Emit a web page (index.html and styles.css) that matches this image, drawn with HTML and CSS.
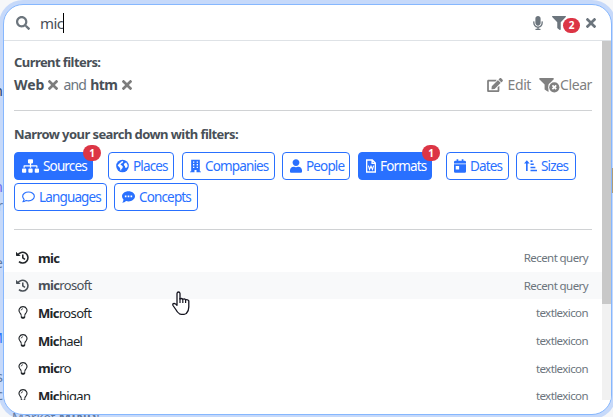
FILE: index.html
```
<!DOCTYPE html>
<html lang="en">
<head>
<meta charset="utf-8">
<title>Search</title>
<link rel="stylesheet" href="styles.css">
</head>
<body>
<svg class="defs" aria-hidden="true">
  <symbol id="search" viewBox="0 0 512 512"><path d="M505 442.700L405.300 343c-4.500-4.500-10.600-7-17-7H372c27.600-35.300 44-79.700 44-128C416 93.100 322.900 0 208 0S0 93.100 0 208s93.100 208 208 208c48.300 0 92.700-16.400 128-44v16.300c0 6.400 2.500 12.500 7 17l99.700 99.700c9.400 9.400 24.600 9.400 33.900 0l28.300-28.300c9.400-9.400 9.400-24.600.1-34zM208 336c-70.700 0-128-57.200-128-128 0-70.700 57.200-128 128-128 70.700 0 128 57.200 128 128 0 70.700-57.200 128-128 128z"/></symbol>
  <symbol id="mic" viewBox="0 0 352 512"><path d="M176 352c53 0 96-43 96-96V96c0-53-43-96-96-96S80 43 80 96v160c0 53 43 96 96 96zm160-160h-16c-8.800 0-16 7.200-16 16v48c0 74.800-64.500 134.800-140.800 127.400C96.700 376.900 48 317.100 48 250.300V208c0-8.800-7.200-16-16-16H16c-8.800 0-16 7.200-16 16v40.200c0 89.600 64 169.500 152 181.700V464H96c-8.800 0-16 7.200-16 16v16c0 8.800 7.200 16 16 16h160c8.800 0 16-7.200 16-16v-16c0-8.800-7.200-16-16-16h-56v-33.800C285.700 418.500 352 344.900 352 256v-48c0-8.800-7.200-16-16-16z"/></symbol>
  <symbol id="funnel" viewBox="0 0 512 512"><path d="M488 0H24C2.700 0-8 25.900 7.100 41L192 225.900V432c0 7.800 3.800 15.200 10.200 19.700l80 56C298 518.700 320 507.500 320 488V225.900L505 41C520 25.900 509.300 0 488 0z"/></symbol>
  <symbol id="x" viewBox="0 0 352 352"><path d="M242.700 176l100.100-100.100c12.300-12.300 12.300-32.200 0-44.500l-22.200-22.200c-12.300-12.300-32.200-12.300-44.500 0L176 109.300 75.900 9.200c-12.300-12.300-32.200-12.300-44.500 0L9.200 31.500c-12.300 12.300-12.300 32.200 0 44.500L109.300 176 9.200 276.100c-12.300 12.300-12.300 32.200 0 44.500l22.200 22.200c12.300 12.300 32.200 12.300 44.500 0L176 242.700l100.100 100.100c12.300 12.300 32.200 12.300 44.500 0l22.200-22.200c12.300-12.300 12.300-32.200 0-44.500z"/></symbol>
  <symbol id="edit" viewBox="0 0 576 512"><path d="M402.600 83.200l90.200 90.200c3.800 3.800 3.800 10 0 13.800L274.400 405.600l-92.800 10.300c-12.400 1.400-22.900-9.100-21.500-21.500l10.300-92.800L388.800 83.200c3.800-3.800 10-3.800 13.800 0zm162-22.900l-48.800-48.800c-15.200-15.200-39.900-15.200-55.200 0l-35.400 35.400c-3.800 3.800-3.800 10 0 13.800l90.200 90.200c3.800 3.800 10 3.800 13.800 0l35.400-35.400c15.200-15.300 15.200-40 0-55.200zM384 346.200V448H64V128h229.800c3.200 0 6.200-1.300 8.500-3.500l40-40c7.600-7.600 2.200-20.500-8.500-20.500H48C21.500 64 0 85.500 0 112v352c0 26.500 21.500 48 48 48h352c26.500 0 48-21.500 48-48V306.200c0-10.700-12.900-16-20.500-8.500l-40 40c-2.200 2.300-3.500 5.300-3.500 8.500z"/></symbol>
  <symbol id="clear" viewBox="0 0 21 15"><path d="M1 0h13q1.400.2.500 1.500L9.500 6.500V14L5.600 11.400V6.500L.5 1.500Q-.3.200 1 0z"/><circle cx="15.300" cy="9.300" r="5.900" fill="#fff"/><circle cx="15.300" cy="9.300" r="5.100"/><path d="M13.400 7.400l3.800 3.800m0-3.800l-3.800 3.800" stroke="#fff" stroke-width="1.700"/></symbol>
  <symbol id="sitemap" viewBox="0 0 640 512"><path d="M128 352H32c-17.700 0-32 14.300-32 32v96c0 17.700 14.300 32 32 32h96c17.700 0 32-14.300 32-32v-96c0-17.700-14.300-32-32-32zm-24-80h192v48h48v-48h192v48h48v-57.600c0-21.200-17.200-38.400-38.400-38.400H344v-64h40c17.700 0 32-14.300 32-32V32c0-17.700-14.300-32-32-32H256c-17.700 0-32 14.300-32 32v96c0 17.700 14.300 32 32 32h40v64H94.400C73.200 224 56 241.200 56 262.400V320h48v-48zm264 80h-96c-17.700 0-32 14.300-32 32v96c0 17.700 14.300 32 32 32h96c17.700 0 32-14.300 32-32v-96c0-17.700-14.300-32-32-32zm240 0h-96c-17.700 0-32 14.300-32 32v96c0 17.700 14.300 32 32 32h96c17.700 0 32-14.300 32-32v-96c0-17.700-14.300-32-32-32z"/></symbol>
  <symbol id="globe" viewBox="0 0 16 16"><circle cx="8" cy="8" r="7.800"/><path fill="#fff" d="M7.500 1.800L9 2.500 8 4.200 6.500 5 5.500 6.500 7.200 7.500 8.500 9 7.800 10.700 6.500 12 6.300 13.700 5.400 13.300 5 10.600 3.500 9 2 7.200 5.500 3.800zM10.500 4.500l2-.8 1.600 2.800.3 1.700-1.800 2.300-1.400-.8-.2-1.600-1.300-1 .1-1.300z"/></symbol>
  <symbol id="building" viewBox="0 0 14 16"><path fill-rule="evenodd" d="M1.500 0h11v15H14v1H8.300v-3H5.700v3H0v-1h1.500zM3.800 2.200v1.700h1.700V2.200zm4.700 0v1.700h1.700V2.200zM3.800 5.600v1.700h1.700V5.600zm4.700 0v1.700h1.700V5.600zM3.800 9v1.700h1.700V9zm4.700 0v1.700h1.700V9z"/></symbol>
  <symbol id="user" viewBox="0 0 448 512"><path d="M224 256c70.700 0 128-57.300 128-128S294.700 0 224 0 96 57.300 96 128s57.300 128 128 128zm89.600 32h-16.700c-22.200 10.200-46.900 16-72.900 16s-50.600-5.800-72.900-16h-16.700C60.200 288 0 348.200 0 422.400V464c0 26.500 21.500 48 48 48h352c26.500 0 48-21.500 48-48v-41.600c0-74.200-60.200-134.400-134.400-134.400z"/></symbol>
  <symbol id="doc" viewBox="0 0 12 16"><path fill="none" stroke="currentColor" stroke-width="1.600" d="M1.600.8h6l3.600 3.600v10.800H.8V.8zM7.300.8v4h4"/><path fill="none" stroke="currentColor" stroke-width="1.300" d="M2.900 7.600l1.300 4.600L6 8.200l1.800 4 1.300-4.600"/></symbol>
  <symbol id="calendar" viewBox="0 0 14 16"><path fill-rule="evenodd" d="M3 0h2v2h4V0h2v2h1.500Q14 2 14 3.500V5H0V3.500Q0 2 1.500 2H3zM0 6h14v8.500q0 1.500-1.500 1.500h-11Q0 16 0 14.500zm2 2v4h4V8z"/></symbol>
  <symbol id="sort" viewBox="0 0 16 16"><path d="M3.500 1L7 5H4.500v9h-2V5H0zM8 1h2.500v2H8zm0 3.900h4v2H8zm0 3.900h6v2H8zm0 3.800h8v2H8z"/></symbol>
  <symbol id="comment" viewBox="0 0 16 14"><path fill="none" stroke="currentColor" stroke-width="1.400" stroke-linejoin="round" d="M8 .8c4 0 7.200 2.400 7.200 5.400S12 11.700 8 11.700q-1.500 0-2.900-.5-1.600 1.600-4 1.700 1.400-1.500 1.500-3Q.8 8.300.8 6.200C.8 3.200 4 .8 8 .8z"/></symbol>
  <symbol id="dots" viewBox="0 0 16 14"><path d="M8 0c4.400 0 8 2.800 8 6.200s-3.600 6.300-8 6.300q-1.500 0-2.900-.5Q3 13.900.3 14q1.500-1.700 1.500-3.800Q0 8.500 0 6.200C0 2.800 3.600 0 8 0z"/><path fill="#fff" d="M3.500 5.300h2v2h-2zm3.500 0h2v2H7zm3.500 0h2v2h-2z"/></symbol>
  <symbol id="history" viewBox="0 0 14 14"><path fill="none" stroke="currentColor" stroke-width="1.700" d="M2 4.300A5.800 5.800 0 1 1 3.200 11.500M7.300 3.700v3.600l2.400 1.800"/><path d="M0 .8L1.600 2.500 5 5.300H.6L0 4.800z"/></symbol>
  <symbol id="bulb" viewBox="0 0 10 14"><path fill="none" stroke="currentColor" stroke-width="1.200" d="M3 9.800Q2.900 8.600 1.700 7.300C-.6 4.400 1.500.7 5 .7s5.600 3.700 3.300 6.600Q7.100 8.600 7 9.800"/><path d="M2.600 10h1.100v1.500h2.600V10h1.100v2.400L6.200 13.700H3.800L2.600 12.400z"/><path fill="none" stroke="currentColor" stroke-width=".8" d="M3 4.700Q3.200 3 5 2.900"/></symbol>
</svg>
<div class="behind" aria-hidden="true">
  <i class="n1">n</i><i class="n2">n</i><i class="n3">r</i><i class="n4">e</i><i class="n5">M</i><i class="n6">s</i><i class="n7">c</i>
  <span class="swatch"></span><span class="market">Market <b>MIND</b>:</span>
</div>
<main class="panel">
  <header class="bar">
    <svg class="i-search"><use href="#search"/></svg>
    <span class="query">mic</span><span class="caret"></span>
    <svg class="i-mic"><use href="#mic"/></svg>
    <span class="filter"><svg><use href="#funnel"/></svg><b class="count">2</b></span>
    <svg class="i-close"><use href="#x"/></svg>
  </header>
  <div class="scroll">
    <div class="content">
      <section class="current">
        <h2>Current filters:</h2>
        <div class="line">
          <div class="chosen"><b>Web</b><svg><use href="#x"/></svg><span class="and">and</span><b class="htm">htm</b><svg><use href="#x"/></svg></div>
          <div class="actions"><svg class="i-edit"><use href="#edit"/></svg><span class="edit">Edit</span><svg class="i-clear"><use href="#clear"/></svg><span class="clear">Clear</span></div>
        </div>
      </section>
      <section class="narrow">
        <h2>Narrow your search down with filters:</h2>
        <div class="buttons">
          <button class="btn on sources"><svg class="w17"><use href="#sitemap"/></svg><span>Sources</span><b class="badge">1</b></button>
          <button class="btn places"><svg class="w13"><use href="#globe"/></svg><span>Places</span></button>
          <button class="btn companies"><svg class="w11"><use href="#building"/></svg><span>Companies</span></button>
          <button class="btn people"><svg class="w12"><use href="#user"/></svg><span>People</span></button>
          <button class="btn on formats"><svg class="w10"><use href="#doc"/></svg><span>Formats</span><b class="badge">1</b></button>
          <button class="btn dates"><svg class="w12"><use href="#calendar"/></svg><span>Dates</span></button>
          <button class="btn sizes"><svg class="w13"><use href="#sort"/></svg><span>Sizes</span></button>
        </div>
        <div class="buttons second">
          <button class="btn languages"><svg class="w13"><use href="#comment"/></svg><span>Languages</span></button>
          <button class="btn concepts"><svg class="w13"><use href="#dots"/></svg><span>Concepts</span></button>
        </div>
      </section>
      <ul class="list">
        <li><svg><use href="#history"/></svg><span><b>mic</b></span><small>Recent query</small></li>
        <li class="hover"><svg><use href="#history"/></svg><span><b>mic</b>rosoft</span><small>Recent query</small></li>
        <li><svg class="bulb"><use href="#bulb"/></svg><span><b>Mic</b>rosoft</span><small>textlexicon</small></li>
        <li><svg class="bulb"><use href="#bulb"/></svg><span><b>Mic</b>hael</span><small>textlexicon</small></li>
        <li><svg class="bulb"><use href="#bulb"/></svg><span><b>mic</b>ro</span><small>textlexicon</small></li>
        <li><svg class="bulb"><use href="#bulb"/></svg><span><b>Mic</b>higan</span><small>textlexicon</small></li>
      </ul>
    </div>
    <div class="track"><div class="thumb"></div></div>
  </div>
</main>
<svg class="cursor" viewBox="0 0 18 24"><path fill="#fff" stroke="#151520" stroke-width="1.300" stroke-linejoin="round" d="M5 14V2.500Q5.200 1 6.500 1T8 2.500V8q1.600-1.200 2.800.3 1.800-1 2.800.6 2.200-.7 3.200 1V16q0 4-2.500 6.500Q11 24.300 7.500 22.800 5.300 21.500 3.800 18.500L1 14.500Q.3 12.300 2.200 12.300 3.700 12.600 5 14.300z"/><path stroke="#151520" stroke-width="1.200" d="M8 7v5m2.800-4v4m2.800-3.300V12"/></svg>
</body>
</html>
```
FILE: styles.css
```
* { box-sizing: border-box; }
body { margin: 0; width: 613px; height: 417px; overflow: hidden; padding: 4px 0 0 3px; background: #f6f7f9; font-family: "Noto Sans", sans-serif; color: #212529; }
svg { display: block; fill: currentColor; flex: none; }
.defs { position: absolute; width: 0; height: 0; }
.behind { position: absolute; inset: 0; overflow: hidden; font-size: 14px; line-height: 16px; color: #6c757d; }
.behind i { position: absolute; right: 610px; font-style: normal; }
.n1 { top: 83px; color: #212529; }
.n2 { top: 179px; color: #7b61e8; }
.n3 { top: 198px; }
.n4 { top: 255px; }
.n5 { top: 330px; color: #2970ff; }
.n6 { top: 369px; }
.n7 { top: 387px; }
.swatch { position: absolute; right: 0; top: 168px; width: 2px; height: 25px; background: #d9a441; }
.market { position: absolute; left: 12px; top: 411px; font-size: 13px; line-height: 12px; white-space: nowrap; }
.panel { position: relative; width: 609px; height: 411px; border: 1px solid #86b7fe; border-radius: 20px; background: #fff; box-shadow: 0 0 0 4px rgba(70, 135, 255, .27); overflow: hidden; }
.bar { height: 36px; border-bottom: 1px solid #dee2e6; display: flex; align-items: center; color: #6c757d; padding-left: 12px; }
.i-search { width: 14px; height: 14px; }
.query { margin-left: 10px; color: #495057; font-size: 15px; letter-spacing: -.6px; }
.caret { width: 1px; height: 20px; background: #000; }
.i-mic { width: 10px; height: 14px; margin-left: auto; }
.filter { position: relative; width: 28px; height: 14px; margin-left: 9px; }
.filter svg { width: 14px; height: 14px; }
.count, .badge { position: absolute; background: #dc3545; color: #fff; font-weight: 700; text-align: center; }
.count { left: 11px; top: 2px; width: 17px; height: 15px; border-radius: 8px; font-size: 10px; line-height: 15px; }
.i-close { width: 10px; height: 10px; margin: 0 15px 0 6px; }
.scroll { height: 359px; display: flex; overflow: hidden; }
.content { width: 598px; }
.track { width: 9px; background: #f1f1f1; }
.thumb { height: 263px; background: #c8c8c8; }
section { margin: 0 10px; }
h2 { margin: 0; font-size: 13px; line-height: 20px; color: #495057; letter-spacing: -.57px; }
.current { height: 70px; padding-top: 11px; border-bottom: 1px solid #d0d2d4; }
.line { display: flex; justify-content: space-between; height: 20px; margin-top: 3px; font-size: 14px; line-height: 20px; color: #6c757d; }
.chosen, .actions { display: flex; align-items: center; }
.chosen { letter-spacing: -.5px; }
.chosen b { color: #495057; }
.chosen b:first-child { letter-spacing: 0; }
.chosen svg { width: 10px; height: 10px; color: #7d7d7d; margin-left: 4px; }
.and { margin: 0 4px 0 5px; letter-spacing: -.8px; }
.actions { color: #808080; letter-spacing: -.4px; }
.i-edit { width: 16px; height: 14px; }
.edit { margin: 0 8px 0 5px; }
.i-clear { width: 21px; height: 15px; }
.narrow { height: 119px; padding-top: 13px; border-bottom: 1px solid #d0d2d4; }
.buttons { display: flex; margin-top: 8px; }
.second { margin-top: 3px; gap: 7px; }
.btn { position: relative; display: flex; align-items: center; justify-content: flex-start; gap: 4px; height: 28px; padding: 0 0 0 7px; border: 1px solid #2970ff; border-radius: 4px; background: #fff; color: #2970ff; font: 13.500px/26px "Noto Sans", sans-serif; letter-spacing: -.85px; }
.btn span { position: relative; top: -.5px; }
.btn svg { height: 14px; }
.on { background: #2970ff; color: #fff; }
.w17 { width: 17px; } .w13 { width: 13px; } .w12 { width: 12px; } .w11 { width: 11px; } .w10 { width: 10px; }
.sources { width: 79px; } .places { width: 66px; margin-left: 15px; } .companies { width: 93px; margin-left: 8px; } .people { width: 68px; margin-left: 7px; } .formats { width: 74px; margin-left: 8px; } .dates { width: 63px; margin-left: 14px; } .sizes { width: 60px; margin-left: 7px; } .languages { width: 93px; } .concepts { width: 84px; }
.badge { right: -9px; top: -8px; width: 18px; height: 16px; border-radius: 8px; font-size: 10px; line-height: 16px; letter-spacing: 0; }
.list { list-style: none; margin: 0; padding: 14px 0 0; }
.list li { display: flex; align-items: center; height: 27.600px; padding: 0 14px 0 12px; font-size: 13px; letter-spacing: -.65px; }
.list svg { width: 13px; height: 13px; margin-right: 9px; }
.list .bulb { width: 10px; margin: 0 10px 0 2px; }
.list small { margin-left: auto; font-size: 11.500px; color: #6c757d; letter-spacing: -.58px; }
.list .hover { background: #f8f9fa; color: #495057; }
.cursor { position: absolute; left: 172px; top: 291px; width: 18px; height: 24px; }
```
